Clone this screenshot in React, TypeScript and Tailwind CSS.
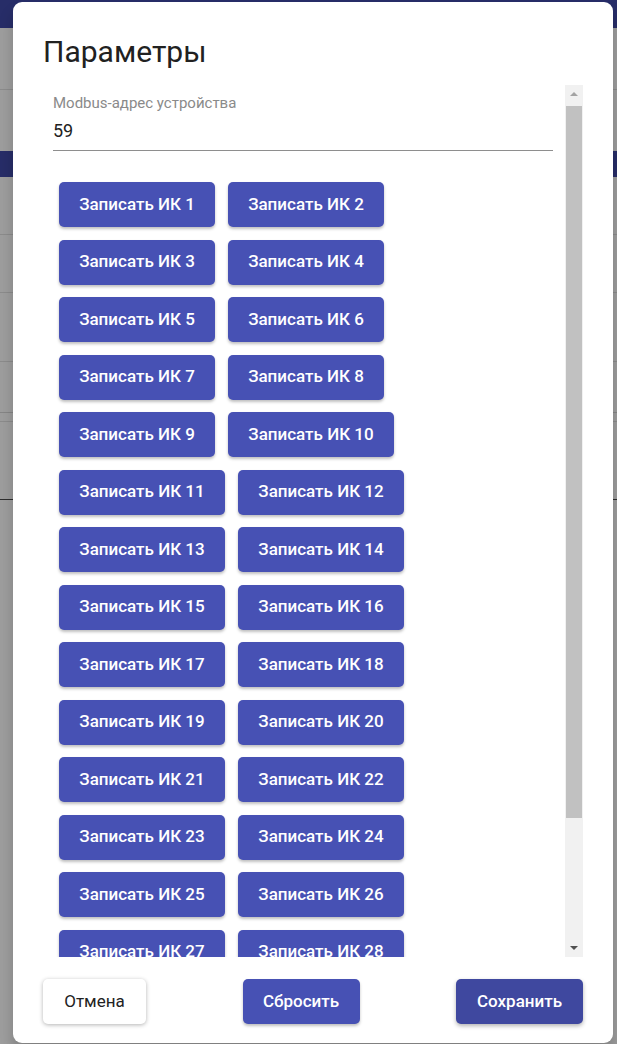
import React from "react";

const font = { fontFamily: "Roboto, 'Noto Sans', sans-serif" };

// page behind the modal, seen through the grey backdrop
const backdropBands: { h: string; cls: string }[] = [
    { h: "h-[28px]", cls: "bg-[#272d68]" },
    { h: "h-[62px]", cls: "border-b border-[#8c8c8c]" },
    { h: "h-[61px]", cls: "" },
    { h: "h-[26px]", cls: "bg-[#272d68]" },
    { h: "h-[58px]", cls: "border-b border-[#8c8c8c]" },
    { h: "h-[58px]", cls: "border-b border-[#8c8c8c]" },
    { h: "h-[69px]", cls: "border-b border-[#8c8c8c]" },
    { h: "h-[51px]", cls: "border-b border-[#868686]" },
    { h: "h-[9px]", cls: "border-b border-[#8c8c8c]" },
    { h: "h-[78px]", cls: "border-b border-[#2e2e2e]" },
];

const rows = Array.from({ length: 14 }, (_, i) => [i * 2 + 1, i * 2 + 2]);

function WriteButton({ n }: { n: number }) {
    return (
        <button
            className={`flex h-[45px] shrink-0 items-center justify-center rounded-[5px] bg-[#4751b4] text-[17px] font-medium text-white shadow-[0_2px_3px_rgba(0,0,0,0.25)] ${
                n < 10 ? "w-[156px]" : "w-[166px]"
            }`}
        >
            Записать ИК {n}
        </button>
    );
}

function FakeScrollbar() {
    return (
        <div className="flex w-[18px] shrink-0 flex-col bg-[#f1f1f1]">
            <div className="flex h-[18px] items-center justify-center">
                <span className="h-0 w-0 border-x-[4px] border-b-[4px] border-x-transparent border-b-[#a3a3a3]" />
            </div>
            <div className="mx-[1px] mt-[3px] h-[712px] bg-[#c1c1c1]" />
            <div className="flex-1" />
            <div className="flex h-[18px] items-center justify-center">
                <span className="h-0 w-0 border-x-[4px] border-t-[4px] border-x-transparent border-t-[#505050]" />
            </div>
        </div>
    );
}

export default function App() {
    return (
        <div className="relative h-[1044px] w-[617px] overflow-hidden bg-[#9e9e9e]" style={font}>
            <div className="flex flex-col">
                {backdropBands.map((b, i) => (
                    <div key={i} className={`${b.h} ${b.cls}`} />
                ))}
            </div>

            <div className="absolute left-[13px] top-[2px] flex h-[1041px] w-[600px] flex-col rounded-[9px] bg-white px-[30px] shadow-[0_11px_15px_rgba(0,0,0,0.2)]">
                <h2 className="pt-[32px] text-[30px] leading-[36px] font-normal text-[#212121]">Параметры</h2>

                <div className="mt-[15px] flex h-[872px] shrink-0 overflow-hidden">
                    <div className="flex-1 overflow-hidden">
                        <div className="ml-[10px] mr-[12px] mt-[9px] border-b border-[#8e8e8e] pb-[7px]">
                            <p className="text-[15px] leading-[18px] text-[#8a8a8a]">Modbus-адрес устройства</p>
                            <p className="mt-[7px] text-[18px] leading-[24px] text-[#212121]">59</p>
                        </div>

                        <div className="mt-[31px] flex flex-col gap-[12.5px] pl-[16px]">
                            {rows.map(([a, b]) => (
                                <div key={a} className="flex gap-[13px]">
                                    <WriteButton n={a} />
                                    <WriteButton n={b} />
                                </div>
                            ))}
                        </div>
                    </div>
                    <FakeScrollbar />
                </div>

                <div className="flex items-center justify-between pb-[19px] pt-[22px]">
                    <button className="h-[45px] w-[103px] rounded-[5px] bg-white text-[17px] text-[#222] shadow-[0_1px_4px_rgba(0,0,0,0.3)]">
                        Отмена
                    </button>
                    <button className="h-[45px] w-[117px] rounded-[5px] bg-[#4751b4] text-[17px] font-medium text-white shadow-[0_2px_3px_rgba(0,0,0,0.25)]">
                        Сбросить
                    </button>
                    <button className="h-[45px] w-[127px] rounded-[5px] bg-[#3f489f] text-[17px] font-medium text-white shadow-[0_2px_4px_rgba(0,0,0,0.3)]">
                        Сохранить
                    </button>
                </div>
            </div>
        </div>
    );
}
